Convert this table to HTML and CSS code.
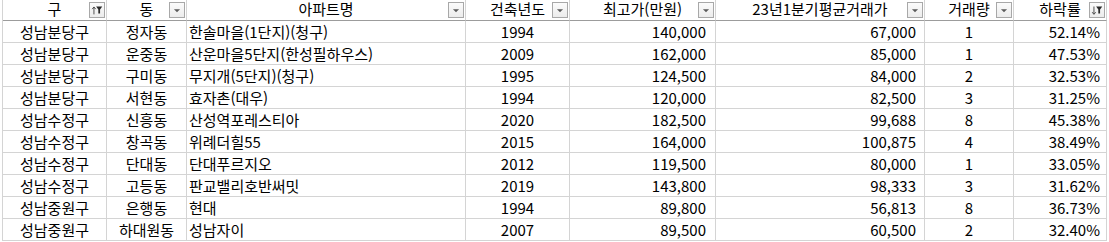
FILE: index.html
```html
<!DOCTYPE html>
<html lang="ko">
<head>
<meta charset="utf-8">
<title>성남 아파트 하락률</title>
<link rel="stylesheet" href="styles.css">
</head>
<body>
<div class="sheet">
  <div class="hd">구<span class="fbtn"><svg viewBox="0 0 16 16"><path d="M4.5 5v8M2.5 7l2-2.5 2 2.5" class="arr"/><path d="M7 4h7l-2.5 3.5V12h-2V7.5z" class="fun"/></svg></span></div>
  <div class="hd">동<span class="fbtn"><svg viewBox="0 0 16 16"><path d="M4.5 7h7L8 10.5z" class="tri"/></svg></span></div>
  <div class="hd">아파트명<span class="fbtn"><svg viewBox="0 0 16 16"><path d="M4.5 7h7L8 10.5z" class="tri"/></svg></span></div>
  <div class="hd">건축년도<span class="fbtn"><svg viewBox="0 0 16 16"><path d="M4.5 7h7L8 10.5z" class="tri"/></svg></span></div>
  <div class="hd">최고가(만원)<span class="fbtn"><svg viewBox="0 0 16 16"><path d="M4.5 7h7L8 10.5z" class="tri"/></svg></span></div>
  <div class="hd">23년1분기평균거래가<span class="fbtn"><svg viewBox="0 0 16 16"><path d="M4.5 7h7L8 10.5z" class="tri"/></svg></span></div>
  <div class="hd">거래량<span class="fbtn"><svg viewBox="0 0 16 16"><path d="M4.5 7h7L8 10.5z" class="tri"/></svg></span></div>
  <div class="hd">하락률<span class="fbtn"><svg viewBox="0 0 16 16"><path d="M4.5 4v8.5M2.5 10.5l2 2.5 2-2.5" class="arr"/><path d="M7 4h7l-2.5 3.5V12h-2V7.5z" class="fun"/></svg></span></div>

  <div class="c ctr">성남분당구</div><div class="c ctr">정자동</div><div class="c lft">한솔마을(1단지)(청구)</div><div class="c ctr">1994</div><div class="c rgt p10">140,000</div><div class="c rgt p9">67,000</div><div class="c ctr">1</div><div class="c rgt p7">52.14%</div>
  <div class="c ctr">성남분당구</div><div class="c ctr">운중동</div><div class="c lft">산운마을5단지(한성필하우스)</div><div class="c ctr">2009</div><div class="c rgt p10">162,000</div><div class="c rgt p9">85,000</div><div class="c ctr">1</div><div class="c rgt p7">47.53%</div>
  <div class="c ctr">성남분당구</div><div class="c ctr">구미동</div><div class="c lft">무지개(5단지)(청구)</div><div class="c ctr">1995</div><div class="c rgt p10">124,500</div><div class="c rgt p9">84,000</div><div class="c ctr">2</div><div class="c rgt p7">32.53%</div>
  <div class="c ctr">성남분당구</div><div class="c ctr">서현동</div><div class="c lft">효자촌(대우)</div><div class="c ctr">1994</div><div class="c rgt p10">120,000</div><div class="c rgt p9">82,500</div><div class="c ctr">3</div><div class="c rgt p7">31.25%</div>
  <div class="c ctr">성남수정구</div><div class="c ctr">신흥동</div><div class="c lft">산성역포레스티아</div><div class="c ctr">2020</div><div class="c rgt p10">182,500</div><div class="c rgt p9">99,688</div><div class="c ctr">8</div><div class="c rgt p7">45.38%</div>
  <div class="c ctr">성남수정구</div><div class="c ctr">창곡동</div><div class="c lft">위례더힐55</div><div class="c ctr">2015</div><div class="c rgt p10">164,000</div><div class="c rgt p9">100,875</div><div class="c ctr">4</div><div class="c rgt p7">38.49%</div>
  <div class="c ctr">성남수정구</div><div class="c ctr">단대동</div><div class="c lft">단대푸르지오</div><div class="c ctr">2012</div><div class="c rgt p10">119,500</div><div class="c rgt p9">80,000</div><div class="c ctr">1</div><div class="c rgt p7">33.05%</div>
  <div class="c ctr">성남수정구</div><div class="c ctr">고등동</div><div class="c lft">판교밸리호반써밋</div><div class="c ctr">2019</div><div class="c rgt p10">143,800</div><div class="c rgt p9">98,333</div><div class="c ctr">3</div><div class="c rgt p7">31.62%</div>
  <div class="c ctr">성남중원구</div><div class="c ctr">은행동</div><div class="c lft">현대</div><div class="c ctr">1994</div><div class="c rgt p10">89,800</div><div class="c rgt p9">56,813</div><div class="c ctr">8</div><div class="c rgt p7">36.73%</div>
  <div class="c ctr">성남중원구</div><div class="c ctr">하대원동</div><div class="c lft">성남자이</div><div class="c ctr">2007</div><div class="c rgt p10">89,500</div><div class="c rgt p9">60,500</div><div class="c ctr">2</div><div class="c rgt p7">32.40%</div>
</div>
</body>
</html>
```
FILE: styles.css
```css
* { box-sizing: border-box; }
html, body { margin: 0; padding: 0; background: #ffffff; }
body {
  font-family: "Noto Sans CJK KR", "Noto Sans", sans-serif;
  font-size: 15px;
  color: #000000;
}
.sheet {
  display: grid;
  grid-template-columns: 104px 80px 279px 104px 146px 209px 89px 93px;
  grid-auto-rows: 22px;
  margin-left: 2px;
  border-left: 1px solid #d4d4d4;
  width: max-content;
}
.hd {
  position: relative;
  height: 21px;
  line-height: 18px;
  text-align: center;
  white-space: nowrap;
  border-right: 1px solid #d4d4d4;
  border-bottom: 1px solid #9c9c9c;
}
.sheet > .hd { grid-row: 1; }
.sheet { grid-template-rows: 21px; }
.fbtn {
  position: absolute;
  right: 1px;
  top: 2px;
  width: 16px;
  height: 16px;
  border: 1px solid #a8a8a8;
  background: linear-gradient(#fbfbfb, #ececec);
}
.fbtn svg { display: block; width: 14px; height: 14px; }
.tri { fill: #5a5a5a; }
.arr { fill: none; stroke: #3a3a3a; stroke-width: 1; }
.fun { fill: #2a2a2a; }
.c {
  height: 22px;
  line-height: 21px;
  white-space: nowrap;
  overflow: hidden;
  border-right: 1px solid #d4d4d4;
  border-bottom: 1px solid #d4d4d4;
}
.ctr { text-align: center; }
.lft { text-align: left; padding-left: 2px; }
.rgt { text-align: right; }
.p10 { padding-right: 9px; }
.p9 { padding-right: 8px; }
.p7 { padding-right: 6px; }
```
